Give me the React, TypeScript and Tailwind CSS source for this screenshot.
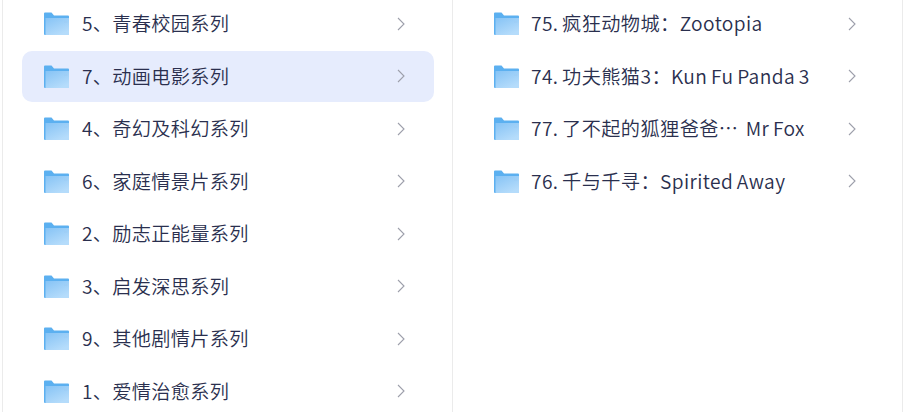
const leftItems = [
  '5、青春校园系列',
  '7、动画电影系列',
  '4、奇幻及科幻系列',
  '6、家庭情景片系列',
  '2、励志正能量系列',
  '3、启发深思系列',
  '9、其他剧情片系列',
  '1、爱情治愈系列',
];

const rightItems = [
  '75. 疯狂动物城：Zootopia',
  '74. 功夫熊猫3：Kun Fu Panda 3',
  '77. 了不起的狐狸爸爸…  Mr Fox',
  '76. 千与千寻：Spirited Away',
];

function FolderIcon() {
  return (
    <svg width="25" height="23" viewBox="0 0 25 23" className="shrink-0">
      <defs>
        <linearGradient id="folderFront" x1="0" y1="0" x2="0.6" y2="1">
          <stop offset="0" stopColor="#86c3f5" />
          <stop offset="1" stopColor="#b5dcfb" />
        </linearGradient>
      </defs>
      <path d="M0 1.5A1 1 0 0 1 1 .5h6.5l2.5 3h14a1 1 0 0 1 1 1V23H1a1 1 0 0 1-1-1z" fill="#5cb0f0" />
      <path d="M1.5 6H25v17H1.5z" fill="url(#folderFront)" />
      <path d="M20 9.5h3.5v1H20z" fill="#9ccdf4" />
    </svg>
  );
}

function Chevron() {
  return (
    <svg width="8" height="14" viewBox="0 0 8 14" fill="none" stroke="#9d9fab" strokeWidth="1.1" className="shrink-0">
      <path d="M1 1l6 6-6 6" />
    </svg>
  );
}

function Row({ label, active, chevronGap, textClass }: { label: string; active?: boolean; chevronGap: string; textClass: string }) {
  return (
    <div className={`flex h-[51px] items-center rounded-[10px] pl-[22px] ${chevronGap} ${active ? 'bg-[#e6ecfd]' : ''}`}>
      <FolderIcon />
      <span className={`${textClass} flex-1 whitespace-pre text-[19.2px] font-[350] text-[#2a2f4e]`}>{label}</span>
      <Chevron />
    </div>
  );
}

export default function App() {
  return (
    <div className="h-[412px] w-[910px] overflow-hidden bg-white font-['Noto_Sans_CJK_SC','Noto_Sans',sans-serif]">
      <div className="ml-[2px] flex h-full w-[901px] border-x border-[#ebebeb]">
        <div className="w-[450px] shrink-0 border-r border-[#ebebeb] pl-[19px] pr-[18px]">
          <div className="-mt-[2px] flex flex-col gap-[1.5px]">
            {leftItems.map((t, i) => (
              <Row key={t} label={t} active={i === 1} chevronGap="pr-[29px]" textClass="ml-[13px] tracking-[0.3px]" />
            ))}
          </div>
        </div>
        <div className="flex-1 pl-[19px] pr-[18px]">
          <div className="-mt-[2px] flex flex-col gap-[1.5px]">
            {rightItems.map((t) => (
              <Row key={t} label={t} chevronGap="pr-[28px]" textClass="ml-[12px] tracking-[0.4px] [word-spacing:-1px]" />
            ))}
          </div>
        </div>
      </div>
    </div>
  );
}
